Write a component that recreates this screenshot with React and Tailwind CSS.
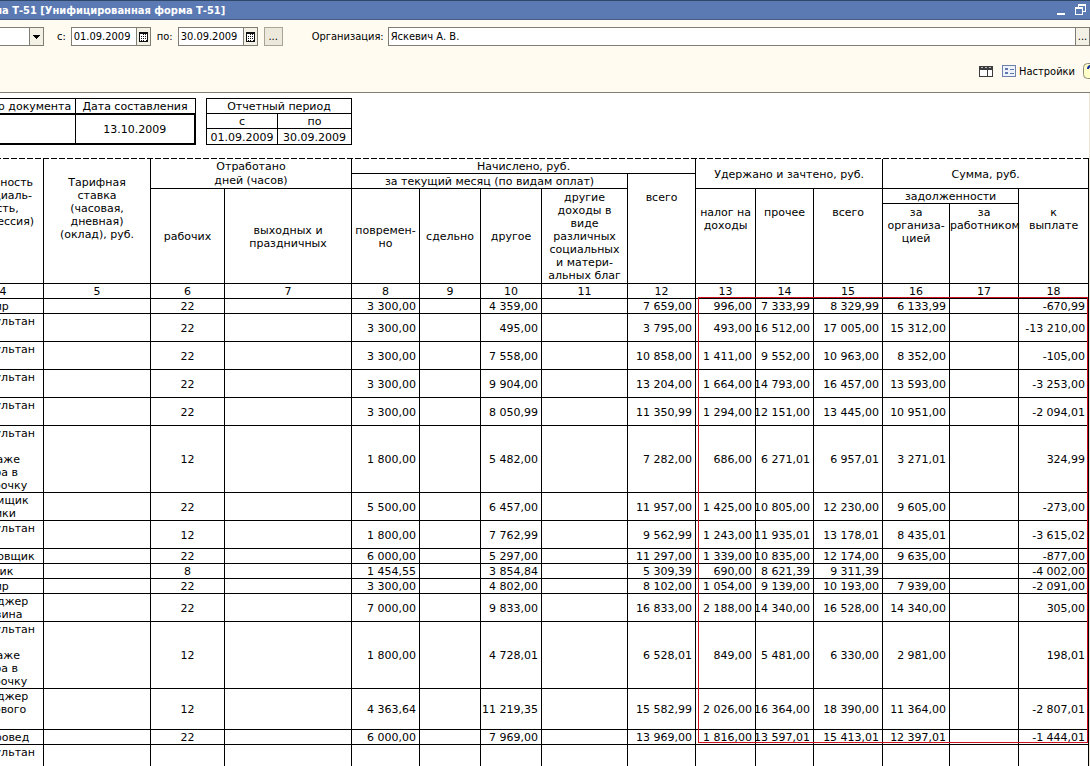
import React from "react";

const columnWidths = [81, 107, 74, 127, 68, 61, 61, 86, 68, 60, 58, 69, 67, 69, 70];

// position, worked days, accrued (8, 10, 12), withheld (13, 14, 15), debt (16), to pay (18)
const rows = [
  [["Кассир"], "22", "3 300,00", "4 359,00", "7 659,00", "996,00", "7 333,99", "8 329,99", "6 133,99", "-670,99"],
  [["консультан", "т"], "22", "3 300,00", "495,00", "3 795,00", "493,00", "16 512,00", "17 005,00", "15 312,00", "-13 210,00"],
  [["консультан", "т"], "22", "3 300,00", "7 558,00", "10 858,00", "1 411,00", "9 552,00", "10 963,00", "8 352,00", "-105,00"],
  [["консультан", "т"], "22", "3 300,00", "9 904,00", "13 204,00", "1 664,00", "14 793,00", "16 457,00", "13 593,00", "-3 253,00"],
  [["консультан", "т"], "22", "3 300,00", "8 050,99", "11 350,99", "1 294,00", "12 151,00", "13 445,00", "10 951,00", "-2 094,01"],
  [["консультан", "т по", "продаже", "товара в", "рассрочку"], "12", "1 800,00", "5 482,00", "7 282,00", "686,00", "6 271,01", "6 957,01", "3 271,01", "324,99"],
  [["приемщик", "техники"], "22", "5 500,00", "6 457,00", "11 957,00", "1 425,00", "10 805,00", "12 230,00", "9 605,00", "-273,00"],
  [["консультан", "т"], "12", "1 800,00", "7 762,99", "9 562,99", "1 243,00", "11 935,01", "13 178,01", "8 435,01", "-3 615,02"],
  [["Кладовщик"], "22", "6 000,00", "5 297,00", "11 297,00", "1 339,00", "10 835,00", "12 174,00", "9 635,00", "-877,00"],
  [["грузчик"], "8", "1 454,55", "3 854,84", "5 309,39", "690,00", "8 621,39", "9 311,39", "", "-4 002,00"],
  [["Кассир"], "22", "3 300,00", "4 802,00", "8 102,00", "1 054,00", "9 139,00", "10 193,00", "7 939,00", "-2 091,00"],
  [["менеджер", "магазина"], "22", "7 000,00", "9 833,00", "16 833,00", "2 188,00", "14 340,00", "16 528,00", "14 340,00", "305,00"],
  [["консультан", "т по", "продаже", "товара в", "рассрочку"], "12", "1 800,00", "4 728,01", "6 528,01", "849,00", "5 481,00", "6 330,00", "2 981,00", "198,01"],
  [["менеджер", "торгового", "зала"], "12", "4 363,64", "11 219,35", "15 582,99", "2 026,00", "16 364,00", "18 390,00", "11 364,00", "-2 807,01"],
  [["Товаровед"], "22", "6 000,00", "7 969,00", "13 969,00", "1 816,00", "13 597,01", "15 413,01", "12 397,01", "-1 444,01"],
  [["консультан", "т"], "", "", "", "", "", "", "", "", ""],
];

function Lines({ items }) {
  return items.map((line, i) => (
    <span key={i} className="block whitespace-nowrap">
      {line}
    </span>
  ));
}

function Th({ lines, top, className = "", ...rest }) {
  return (
    <th
      className={`border-r border-b border-black p-0 font-normal ${
        top ? "pt-[17px] align-top" : "pt-px align-middle"
      } ${className}`}
      {...rest}
    >
      <Lines items={lines} />
    </th>
  );
}

function Money({ value }) {
  return (
    <td className="border-r border-b border-black p-0 pt-px pr-[3px]">
      <div className="flex justify-end whitespace-nowrap">{value}</div>
    </td>
  );
}

function CalendarIcon() {
  return (
    <svg width="9" height="10" viewBox="0 0 9 10" shapeRendering="crispEdges" aria-hidden="true">
      <path d="M0 0h9v10H0z" fill="#111" />
      <path d="M1 2h7v6H7v1H1z" fill="#fff" />
      <path
        d="M4 2h1v1H4zM6 2h1v1H6zM2 4h1v1H2zM4 4h1v1H4zM6 4h1v1H6zM2 6h1v1H2zM4 6h1v1H4zM6 6h1v1H6zM2 8h1v1H2zM4 8h1v1H4z"
        fill="#111"
      />
    </svg>
  );
}

function DateField({ id, label, value }) {
  return (
    <div className="flex items-center gap-[5px]">
      <label htmlFor={id}>{label}</label>
      <div className="flex h-[19px] border border-[#7f7d74] bg-white">
        <input id={id} defaultValue={value} className="w-[64px] bg-transparent pl-[2px] outline-none" />
        <button
          aria-label="Календарь"
          className="flex w-[14px] items-center justify-center border-l border-[#7f7d74] bg-[#f3f0e6]"
        >
          <CalendarIcon />
        </button>
      </div>
    </div>
  );
}

function TitleBar() {
  return (
    <header className="flex h-5 items-center justify-between overflow-hidden border-t border-b border-t-[#2f4868] border-b-[#4a5a80] bg-[#5b7ab4] pr-1 text-white">
      <h1 className="-ml-1.5 whitespace-nowrap font-bold">ма Т-51 [Унифицированная форма Т-51]</h1>
      <div className="flex items-center gap-[10px]">
        <button aria-label="Свернуть">
          <svg width="8" height="12" viewBox="0 0 8 12" shapeRendering="crispEdges" aria-hidden="true">
            <path d="M0 9h8v2H0z" fill="#fff" />
          </svg>
        </button>
        <button aria-label="Восстановить">
          <svg width="11" height="12" viewBox="0 0 11 12" shapeRendering="crispEdges" aria-hidden="true">
            <path d="M3 0h8v8H8V7h2V2H4v1H3zM0 3h8v8H0zM1 5v5h6V5z" fill="#fff" fillRule="evenodd" />
          </svg>
        </button>
      </div>
    </header>
  );
}

function Toolbar() {
  return (
    <div className="border-b border-[#7f7d74] bg-[#fffbf0]">
      <div className="flex items-center pt-[7px]">
        <div className="flex h-[19px] w-11 border border-l-0 border-[#7f7d74] bg-white">
          <input aria-label="Вид" className="min-w-0 flex-1 bg-transparent outline-none" />
          <button
            aria-label="Выбрать"
            className="flex w-[14px] items-center justify-center border-l border-[#7f7d74] bg-[#f3f0e6]"
          >
            <svg width="7" height="4" viewBox="0 0 7 4" shapeRendering="crispEdges" aria-hidden="true">
              <path d="M0 0h7v1H6v1H5v1H4v1H3V3H2V2H1V1H0z" fill="#000" />
            </svg>
          </button>
        </div>
        <div className="ml-[13px] flex items-center gap-[6px]">
          <DateField id="from" label="с:" value="01.09.2009" />
          <DateField id="to" label="по:" value="30.09.2009" />
          <button className="h-[19px] w-[19px] border border-[#a9a594] bg-[#ece8db] leading-3">...</button>
        </div>
        <label htmlFor="org" className="ml-[29px] w-[76px]">
          Организация:
        </label>
        <div className="flex h-[19px] flex-1 border border-r-0 border-[#7f7d74] bg-white">
          <input
            id="org"
            defaultValue="Яскевич А. В."
            className="min-w-0 flex-1 bg-transparent pl-[2px] outline-none"
          />
          <button className="w-[15px] border-x border-[#7f7d74] bg-[#f3f0e6] leading-3">...</button>
        </div>
      </div>
      <div className="flex items-center justify-end overflow-hidden pt-[17px] pb-[13px]">
        <button aria-label="Панель" className="mr-[9px]">
          <svg width="14" height="11" viewBox="0 0 14 11" shapeRendering="crispEdges" aria-hidden="true">
            <path d="M0 0h14v11H0z" fill="#3c3c3c" />
            <path d="M1 4h7v6H1zM9 4h4v6H9z" fill="#fff" />
            <path d="M2 1h2v1H2zM6 1h2v1H6zM10 1h2v1h-2z" fill="#bbb" />
          </svg>
        </button>
        <button className="flex items-center gap-[3px]">
          <svg width="14" height="12" viewBox="0 0 14 12" shapeRendering="crispEdges" aria-hidden="true">
            <path d="M0 0h14v12H0z" fill="#6f80ac" />
            <path d="M1 1h12v10H1z" fill="#eef2fb" />
            <path d="M3 3h3v2H3zM3 7h3v2H3zM8 4h4v1H8zM8 8h4v1H8z" fill="#6478b0" />
          </svg>
          Настройки
        </button>
        <button aria-label="Справка" className="-mr-[9px] ml-2">
          <svg width="16" height="16" viewBox="0 0 16 16" aria-hidden="true">
            <rect x="0.5" y="0.5" width="15" height="15" rx="4" fill="#ffffc8" stroke="#8c8c78" />
            <path d="M5 6c0-4 6-4 6-1 0 2-3 2-3 5" fill="none" stroke="#10309c" strokeWidth="2" />
            <path d="M7 12h2v2H7z" fill="#10309c" />
          </svg>
        </button>
      </div>
    </div>
  );
}

function DocumentDate() {
  return (
    <table className="w-[231px] table-fixed border-collapse text-center">
      <colgroup>
        <col className="w-[111px]" />
        <col className="w-[120px]" />
      </colgroup>
      <thead>
        <tr className="h-[15px]">
          <th className="border border-black p-0 pt-px font-normal whitespace-nowrap">Номер документа</th>
          <th className="border border-black p-0 pt-px font-normal whitespace-nowrap">Дата составления</th>
        </tr>
      </thead>
      <tbody>
        <tr className="h-[30px]">
          <td className="border-2 border-r border-black p-0"></td>
          <td className="border-2 border-l border-black p-0">13.10.2009</td>
        </tr>
      </tbody>
    </table>
  );
}

function ReportPeriod() {
  const cell = "border border-black p-0 pt-px font-normal whitespace-nowrap";
  return (
    <table className="w-[145px] table-fixed border-collapse text-center">
      <colgroup>
        <col className="w-[71px]" />
        <col className="w-[74px]" />
      </colgroup>
      <thead>
        <tr className="h-[15px]">
          <th colSpan={2} className={cell}>Отчетный период</th>
        </tr>
        <tr className="h-[15px]">
          <th className={cell}>с</th>
          <th className={cell}>по</th>
        </tr>
      </thead>
      <tbody>
        <tr className="h-[15px]">
          <td className={cell}>01.09.2009</td>
          <td className={cell}>30.09.2009</td>
        </tr>
      </tbody>
    </table>
  );
}

function Payroll() {
  return (
    <div className="relative mt-[13px]">
      <div className="h-px bg-[repeating-linear-gradient(90deg,#000_0_6px,#fff_6px_8px)]" />
      <table className="w-full table-fixed border-separate border-spacing-0 text-center">
        <colgroup>
          {columnWidths.map((width, i) => (
            <col key={i} style={{ width }} />
          ))}
        </colgroup>
        <thead>
          <tr className="h-[15px]">
            <Th rowSpan={4} top className="pr-[5px]" lines={["Должность", "(специаль-", "ность,", "профессия)"]} />
            <Th rowSpan={4} top lines={["Тарифная", "ставка", "(часовая,", "дневная)", "(оклад), руб."]} />
            <Th colSpan={2} rowSpan={2} className="leading-[14px]" lines={["Отработано", "дней (часов)"]} />
            <Th colSpan={5} lines={["Начислено, руб."]} />
            <Th colSpan={3} rowSpan={2} lines={["Удержано и зачтено, руб."]} />
            <Th colSpan={3} rowSpan={2} lines={["Сумма, руб."]} />
          </tr>
          <tr className="h-[15px]">
            <Th colSpan={4} lines={["за текущий месяц (по видам оплат)"]} />
            <Th rowSpan={3} top lines={["всего"]} />
          </tr>
          <tr className="h-[15px]">
            <Th rowSpan={2} lines={["рабочих"]} />
            <Th rowSpan={2} lines={["выходных и", "праздничных"]} />
            <Th rowSpan={2} lines={["повремен-", "но"]} />
            <Th rowSpan={2} lines={["сдельно"]} />
            <Th rowSpan={2} lines={["другое"]} />
            <Th
              rowSpan={2}
              lines={["другие", "доходы в", "виде", "различных", "социальных", "и матери-", "альных благ"]}
            />
            <Th rowSpan={2} top lines={["налог на", "доходы"]} />
            <Th rowSpan={2} top lines={["прочее"]} />
            <Th rowSpan={2} top lines={["всего"]} />
            <Th colSpan={2} lines={["задолженности"]} />
            <Th rowSpan={2} top lines={["к", "выплате"]} />
          </tr>
          <tr className="h-20 align-top">
            <th className="border-r border-b border-black p-0 pt-[2px] font-normal">
              <Lines items={["за", "организа-", "цией"]} />
            </th>
            <th className="border-r border-b border-black p-0 pt-[2px] font-normal">
              <Lines items={["за", "работником"]} />
            </th>
          </tr>
          <tr className="h-[15px]">
            {columnWidths.map((width, i) => (
              <Th key={i} lines={[i + 4]} />
            ))}
          </tr>
        </thead>
        <tbody>
          {rows.map(([position, days, byTime, other, accrued, tax, misc, withheld, debt, pay], i) => (
            <tr key={i}>
              <td className="border-r border-b border-black p-0 pt-px pl-[5px] text-left">
                <Lines items={position} />
              </td>
              <td className="border-r border-b border-black p-0"></td>
              <td className="border-r border-b border-black p-0 pt-px">{days}</td>
              <td className="border-r border-b border-black p-0"></td>
              <Money value={byTime} />
              <Money value="" />
              <Money value={other} />
              <Money value="" />
              <Money value={accrued} />
              <Money value={tax} />
              <Money value={misc} />
              <Money value={withheld} />
              <Money value={debt} />
              <Money value="" />
              <Money value={pay} />
            </tr>
          ))}
        </tbody>
      </table>
      {/* hand-drawn frame over the withheld and payable sums */}
      <div className="pointer-events-none absolute top-[139px] right-px left-[735px] h-[446px] border border-[#d01020]" />
    </div>
  );
}

export default function App() {
  return (
    <div className="flex h-screen flex-col overflow-hidden bg-white font-['DejaVu_Sans_Condensed','DejaVu_Sans',sans-serif] text-[11px] leading-[13px] text-black">
      <TitleBar />
      <Toolbar />
      <main className="min-h-0 flex-1 overflow-hidden border-r border-[#ece4d0] font-['DejaVu_Sans',sans-serif]">
        <div className="-ml-[37px] pt-[5px]">
          <div className="flex gap-[10px]">
            <DocumentDate />
            <ReportPeriod />
          </div>
          <Payroll />
        </div>
      </main>
    </div>
  );
}
